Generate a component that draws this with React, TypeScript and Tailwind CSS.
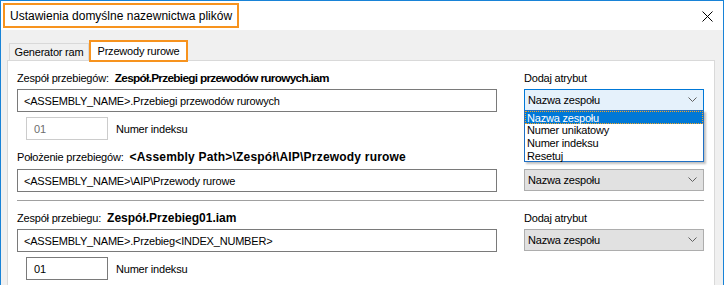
import React from "react";

function Chevron() {
  return (
    <svg width="9" height="6" viewBox="0 0 9 6" className="shrink-0">
      <path d="M0.5 0.5 L4.5 4.5 L8.5 0.5" fill="none" stroke="#606060" strokeWidth="1" />
    </svg>
  );
}

function Combo({ focused = false }: { focused?: boolean }) {
  return (
    <div
      className={
        "h-[22px] w-full flex items-center justify-between pl-[3px] pr-[6px] border " +
        (focused ? "bg-[#e5f1fb] border-[#0078d7]" : "bg-[#e1e1e1] border-[#adadad]")
      }
    >
      <span>Nazwa zespołu</span>
      <Chevron />
    </div>
  );
}

function TextBox({ text }: { text: string }) {
  return (
    <div className="h-[23px] w-full border border-[#7a7a7a] bg-white flex items-center pl-[6px] whitespace-nowrap">
      {text}
    </div>
  );
}

function IndexRow({ disabled }: { disabled?: boolean }) {
  return (
    <div className="flex items-center ml-[9px]">
      <div
        className={
          "h-[23px] w-[82px] border flex items-center pl-[7px] " +
          (disabled ? "border-[#cccccc] text-[#6d6d6d]" : "border-[#7a7a7a] text-black")
        }
      >
        01
      </div>
      <span className="ml-[8px]">Numer indeksu</span>
    </div>
  );
}

export default function App() {
  return (
    <div className="w-[724px] h-[285px] overflow-hidden bg-[#f0f0f0] border border-b-0 border-[#1883d7] flex flex-col font-['Liberation_Sans',Arial,sans-serif] text-[11px] leading-[16px] tracking-[-0.2px] text-black">
      {/* Title bar */}
      <div className="h-[29px] bg-white flex items-start justify-between shrink-0">
        <div className="mt-[2px] ml-[2px] h-[25px] border-2 border-[#f7931e] flex items-center pl-[5px] pr-[5px] text-[12px] tracking-normal">
          Ustawienia domyślne nazewnictwa plików
        </div>
        <svg width="11" height="11" viewBox="0 0 11 11" className="mt-[10px] mr-[10px]">
          <path d="M0.5 0.5 L10.5 10.5 M10.5 0.5 L0.5 10.5" stroke="#000" strokeWidth="1" />
        </svg>
      </div>

      {/* Body */}
      <div className="flex-1 flex flex-col pl-[6px] pr-[8px] pt-[10px]">
        {/* Tabs */}
        <div className="h-[20px] flex items-end pl-[2px] relative z-10">
          <div className="h-[17px] w-[80px] border border-b-0 border-[#d9d9d9] bg-[#f0f0f0] flex items-center justify-center">
            Generator ram
          </div>
          <div className="h-[22px] w-[99px] -mb-[2px] border-2 border-[#f7931e] bg-white flex items-start justify-center pt-[1px]">
            Przewody rurowe
          </div>
        </div>

        {/* Panel */}
        <div className="flex-1 bg-white border border-b-0 border-[#d9d9d9] pl-[9px] pt-[9px]">
          <div className="grid grid-cols-[480px_180px] gap-x-[27px] items-start">
            {/* Row A */}
            <div className="h-[16px] flex items-center whitespace-nowrap">
              <span>Zespół przebiegów:</span>
              <span className="ml-[6px] font-bold text-[11.8px] tracking-[-0.7px]">Zespół.Przebiegi przewodów rurowych.iam</span>
            </div>
            <div className="h-[16px] flex items-center">Dodaj atrybut</div>

            {/* Row B */}
            <div className="mt-[3px]">
              <TextBox text="<ASSEMBLY_NAME>.Przebiegi przewodów rurowych" />
            </div>
            <div className="mt-[3px] relative z-20">
              <Combo focused />
              <div className="absolute left-0 top-[21px] w-[180px] h-[52px] bg-white border border-[#1e6fc4] shadow-[2px_2px_2px_rgba(0,0,0,0.25)] flex flex-col">
                <div className="h-[13px] leading-[13px] bg-[#0078d7] text-white border border-dotted border-[#f5a623] pl-[1px]">
                  Nazwa zespołu
                </div>
                <div className="h-[13px] leading-[13px] pl-[2px]">Numer unikatowy</div>
                <div className="h-[13px] leading-[13px] pl-[2px]">Numer indeksu</div>
                <div className="h-[12px] leading-[12px] pl-[2px]">Resetuj</div>
              </div>
            </div>

            {/* Row C */}
            <div className="mt-[5px]">
              <IndexRow disabled />
            </div>
            <div />

            {/* Row D */}
            <div className="mt-[9px] h-[16px] flex items-center whitespace-nowrap">
              <span>Położenie przebiegów:</span>
              <span className="ml-[6px] font-bold text-[12px] tracking-[0.2px]">&lt;Assembly Path&gt;\Zespół\AIP\Przewody rurowe</span>
            </div>
            <div />

            {/* Row E */}
            <div className="mt-[4px]">
              <TextBox text="<ASSEMBLY_NAME>\AIP\Przewody rurowe" />
            </div>
            <div className="mt-[4px]">
              <Combo />
            </div>

            {/* Separator */}
            <div className="col-span-2 mt-[8px] h-[1px] bg-[#a0a0a0]" />

            {/* Row F */}
            <div className="mt-[9px] h-[16px] flex items-center whitespace-nowrap">
              <span>Zespół przebiegu:</span>
              <span className="ml-[6px] font-bold text-[12px] tracking-[0px]">Zespół.Przebieg01.iam</span>
            </div>
            <div className="mt-[9px] h-[16px] flex items-center">Dodaj atrybut</div>

            {/* Row G */}
            <div className="mt-[3px]">
              <TextBox text="<ASSEMBLY_NAME>.Przebieg<INDEX_NUMBER>" />
            </div>
            <div className="mt-[3px]">
              <Combo />
            </div>

            {/* Row H */}
            <div className="mt-[5px]">
              <IndexRow />
            </div>
            <div />
          </div>
        </div>
      </div>
    </div>
  );
}
